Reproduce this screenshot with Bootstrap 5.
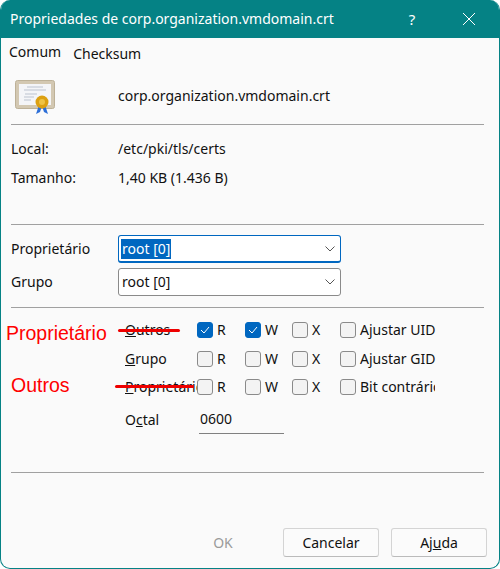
<!DOCTYPE html>
<html lang="pt">
<head>
<meta charset="utf-8">
<title>Propriedades</title>
<link href="https://cdn.jsdelivr.net/npm/bootstrap@5.3.0/dist/css/bootstrap.min.css" rel="stylesheet">
<style>
html,body{height:100%;margin:0;background:#fff}
body{font-family:"Noto Sans","Open Sans",sans-serif;font-size:14px;line-height:20px;color:#111}
.win{width:500px;height:569px;border:solid #058285;border-width:0 1px 1px 1px;border-radius:10px;background:#fafafa;overflow:hidden;position:relative}
.ttl{height:38px;background:#058285;color:#fff;padding:0 0 0 9px}
.ttl-txt{font-size:14px}
.ttl-q{width:20px;text-align:center;margin-right:40px;font-size:15px}
.ttl-x{margin-right:23px}
.tabrow{height:26px;padding-left:8px;padding-top:4px}
.tab2{padding-left:12px;padding-top:2px}
.inforow{height:44px;padding-left:14px;margin-top:10px;margin-bottom:6px}
.ico{width:103px}
.ico svg{display:block}
.sep{height:1px;background:#a0a0a0;margin:0 15px 0 10px}
.kv{padding-left:10px;height:29px}
.kv1{margin-top:9px}
.sep2{margin-top:32px}
.kv-k{width:107px}
.combo{width:223px;height:28px;background:#fff;border:1px solid #8a8a8a;border-radius:3px;padding:0 5px 0 2px}
.combo-on{border-color:#0067c0;border-width:1px 1px 2px}
.combo-txt{padding:0 1px}
.sel{background:#0067c0;color:#fff}
.comborow{padding-left:10px;height:28px;margin-bottom:5px}
.r1{margin-top:10px}
.sep3{margin-top:11px}
.perm{display:grid;grid-template-columns:72px 48px 47px 48px auto;align-items:center;height:28px;padding-left:124px}
.p1{margin-top:8px;margin-bottom:1px}
.permlbl{width:72px;overflow:hidden;white-space:nowrap}
.ck{display:flex;align-items:center;gap:4px;white-space:nowrap}
.box{width:16px;height:16px;border:1px solid #8a8a8a;border-radius:3px;background:#f3f3f3;flex:none}
.box-on{background:#0067c0;border-color:#0067c0;display:flex;align-items:center;justify-content:center}
.clip{width:75px;overflow:hidden}
.octrow{height:28px;padding-left:124px;margin-top:5px}
.octlbl{width:74px}
.octval{width:85px;height:28px;border-bottom:1px solid #808080;padding:3px 0 0 1px}
.sep4{margin-top:38px}
.wbtn{width:96px;height:29px;background:#fbfbfb;border:1px solid #d4d4d4;border-bottom-color:#bbb;border-radius:3px;text-align:center;font-size:14px;line-height:20px;padding:0;color:#111}
.wbtn.okb{border-color:transparent;background:transparent;color:#9a9a9a;opacity:1}
.foot{position:absolute;left:0;right:0;top:528px;padding-right:12px;gap:12px}
.red{position:absolute;color:#f00;font-family:"Liberation Sans",sans-serif;font-size:19.5px;line-height:22px}
.red1{left:5px;top:322px}
.red2{left:10px;top:374px}
.strike{position:absolute;height:3px;background:#e00;border-radius:2px}
.st1{left:117px;top:329px;width:62px}
.st2{left:114px;top:385px;width:79px}
</style>
</head>
<body>
<div class="win">
  <div class="ttl d-flex align-items-center">
    <span class="ttl-txt flex-grow-1">Propriedades de corp.organization.vmdomain.crt</span>
    <span class="ttl-q">?</span>
    <svg class="ttl-x" width="14" height="14" viewBox="0 0 14 14"><path d="M1 1l12 12M13 1L1 13" stroke="#fff" stroke-width="1"/></svg>
  </div>
  <div class="tabrow d-flex"><span>Comum</span><span class="tab2">Checksum</span></div>
  <div class="inforow d-flex align-items-center">
    <div class="ico">
      <svg width="42" height="38" viewBox="0 0 42 38">
        <rect x="0.5" y="3.5" width="39" height="28" rx="2" fill="#d3c8b2" stroke="#bdb198"/>
        <rect x="4" y="7" width="32" height="21" fill="#f4f5f8"/>
        <path d="M12 10h16M9 13h22M10 17h12M9 20h10M9 23h7" stroke="#bcc3cf"/>
        <path d="M24 28l-3 9 4-2 2-6zM30 28l3 9-4-2-2-6z" fill="#2d6fd8"/>
        <circle cx="27" cy="25" r="6.5" fill="#dca012"/>
        <circle cx="27" cy="25" r="3" fill="#efc344"/>
      </svg>
    </div>
    <span>corp.organization.vmdomain.crt</span>
  </div>
  <div class="sep"></div>
  <div class="d-flex kv align-items-center kv1"><span class="kv-k">Local:</span><span>/etc/pki/tls/certs</span></div>
  <div class="d-flex kv align-items-center"><span class="kv-k">Tamanho:</span><span>1,40 KB (1.436 B)</span></div>
  <div class="sep sep2"></div>
  <div class="comborow d-flex align-items-center r1"><span class="kv-k">Proprietário</span>
    <div class="combo combo-on d-flex align-items-center justify-content-between"><span class="combo-txt sel">root [0]</span><svg width="10" height="6" viewBox="0 0 10 6"><path d="M.5.5L5 5 9.5.5" fill="none" stroke="#555"/></svg></div></div>
  <div class="comborow d-flex align-items-center"><span class="kv-k">Grupo</span>
    <div class="combo d-flex align-items-center justify-content-between"><span class="combo-txt">root [0]</span><svg width="10" height="6" viewBox="0 0 10 6"><path d="M.5.5L5 5 9.5.5" fill="none" stroke="#555"/></svg></div></div>
  <div class="sep sep3"></div>
  <div class="perm p1">
    <span class="permlbl"><u>O</u>utros</span>
    <span class="ck"><span class="box box-on"><svg width="10" height="8" viewBox="0 0 10 8"><path d="M1 4l3 3 5-6" fill="none" stroke="#fff"/></svg></span>R</span>
    <span class="ck"><span class="box box-on"><svg width="10" height="8" viewBox="0 0 10 8"><path d="M1 4l3 3 5-6" fill="none" stroke="#fff"/></svg></span>W</span>
    <span class="ck"><span class="box"></span>X</span>
    <span class="ck"><span class="box"></span>Ajustar UID</span>
  </div>
  <div class="perm">
    <span class="permlbl"><u>G</u>rupo</span>
    <span class="ck"><span class="box"></span>R</span>
    <span class="ck"><span class="box"></span>W</span>
    <span class="ck"><span class="box"></span>X</span>
    <span class="ck"><span class="box"></span>Ajustar GID</span>
  </div>
  <div class="perm">
    <span class="permlbl"><u>P</u>roprietário</span>
    <span class="ck"><span class="box"></span>R</span>
    <span class="ck"><span class="box"></span>W</span>
    <span class="ck"><span class="box"></span>X</span>
    <span class="ck"><span class="box"></span><span class="clip">Bit contrário</span></span>
  </div>
  <div class="octrow d-flex align-items-center"><span class="octlbl">O<u>c</u>tal</span><span class="octval">0600</span></div>
  <div class="sep sep4"></div>
  <div class="foot d-flex justify-content-end align-items-center">
    <button type="button" class="wbtn okb btn" disabled>OK</button>
    <button type="button" class="wbtn btn">Cancelar</button>
    <button type="button" class="wbtn btn">Aj<u>u</u>da</button>
  </div>
  <span class="red red1">Proprietário</span>
  <span class="red red2">Outros</span>
  <span class="strike st1"></span>
  <span class="strike st2"></span>
</div>
</body>
</html>
